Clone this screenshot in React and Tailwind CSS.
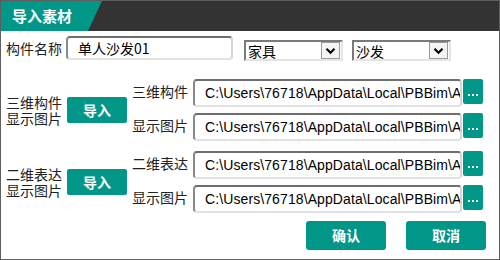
import React from "react";

const cjk = { fontFamily: '"Noto Sans CJK SC", "Noto Sans", sans-serif' };
const PATH = "C:\\Users\\76718\\AppData\\Local\\PBBim\\AppData\\Temp";

function Select({ text }) {
  return (
    <div className="flex h-[21px] w-[99px] items-center border-2 border-t-[#7a7a7a] border-l-[#7a7a7a] border-b-[#e4e4e4] border-r-[#e4e4e4] bg-white">
      <div className="flex-1 pl-[2px] text-[14px] leading-none text-black" style={cjk}>{text}</div>
      <div className="mr-[1px] flex h-[17px] w-[19px] items-center justify-center border border-[#9a9a9a] bg-[#f4f4f4]">
        <svg width="11" height="8" viewBox="0 0 11 8">
          <path d="M1.5 1.8 L5.5 5.8 L9.5 1.8" fill="none" stroke="#000" strokeWidth="2.2" />
        </svg>
      </div>
    </div>
  );
}

function Dots() {
  return (
    <div className="ml-[1px] flex h-[25px] w-[20px] items-end justify-center gap-[2px] rounded-[2px] bg-[#009688] pb-[8px]">
      <span className="h-[2px] w-[2px] bg-white" />
      <span className="h-[2px] w-[2px] bg-white" />
      <span className="h-[2px] w-[2px] bg-white" />
    </div>
  );
}

function PathRow({ label }) {
  return (
    <div className="flex h-[28px] items-start">
      <div className="w-[61px] pt-[3px] text-[14px] leading-[18px] text-[#222]" style={cjk}>{label}</div>
      <div className="flex h-[28px] w-[269px] items-center overflow-hidden whitespace-nowrap rounded-[4px] border-2 border-t-[#6e6e6e] border-l-[#8a8a8a] border-b-[#e2e2e2] border-r-[#d6d6d6] bg-white pl-[10px] text-[14px] tracking-[0.1px] text-black" style={{ fontFamily: '"Liberation Sans", Arial, sans-serif' }}>
        {PATH}
      </div>
      <Dots />
    </div>
  );
}

function Section({ l1, l2, r1 }) {
  return (
    <div className="flex items-center">
      <div className="flex w-[126px] items-center">
        <div className="flex w-[61px] flex-col gap-[1px] text-[14px] leading-[15px] text-[#222]" style={cjk}>
          <div>{l1}</div>
          <div>{l2}</div>
        </div>
        <div className="flex h-[26px] w-[60px] items-center justify-center rounded-[2px] bg-[#009688] text-[14px] font-bold text-white" style={cjk}>
          导入
        </div>
      </div>
      <div className="flex flex-col gap-[6px]">
        <PathRow label={r1} />
        <PathRow label="显示图片" />
      </div>
    </div>
  );
}

export default function App() {
  return (
    <div className="flex h-[260px] w-[500px] flex-col border border-[#5e5e5e] bg-white">
      <div className="h-[30px] shrink-0 bg-[#333333]">
        <div className="flex h-[30px] w-[101px] items-center bg-[#009688] pl-[11px] text-[15px] font-bold text-white [clip-path:polygon(0_0,101px_0,87px_100%,0_100%)]" style={cjk}>
          导入素材
        </div>
      </div>
      <div className="mt-[5px] flex items-start pl-[5px]">
        <div className="w-[60px] pt-[3px] text-[14px] leading-[18px] text-[#222]" style={cjk}>构件名称</div>
        <div className="flex h-[24px] w-[167px] items-center rounded-[4px] border-2 border-t-[#6e6e6e] border-l-[#8a8a8a] border-b-[#e2e2e2] border-r-[#d6d6d6] bg-white pl-[10px] text-[14px] text-black" style={cjk}>
          单人沙发01
        </div>
        <div className="ml-[11px] mt-[4px]"><Select text="家具" /></div>
        <div className="ml-[9px] mt-[4px]"><Select text="沙发" /></div>
      </div>
      <div className="mt-[18px] flex flex-col gap-[10px] pl-[5px]">
        <Section l1="三维构件" l2="显示图片" r1="三维构件" />
        <Section l1="二维表达" l2="显示图片" r1="二维表达" />
      </div>
      <div className="mt-[8px] flex justify-end gap-[20px] pr-[13px]">
        <div className="flex h-[29px] w-[80px] items-center justify-center rounded-[3px] bg-[#009688] text-[14px] font-bold text-white" style={cjk}>确认</div>
        <div className="flex h-[29px] w-[80px] items-center justify-center rounded-[3px] bg-[#009688] text-[14px] font-bold text-white" style={cjk}>取消</div>
      </div>
    </div>
  );
}
